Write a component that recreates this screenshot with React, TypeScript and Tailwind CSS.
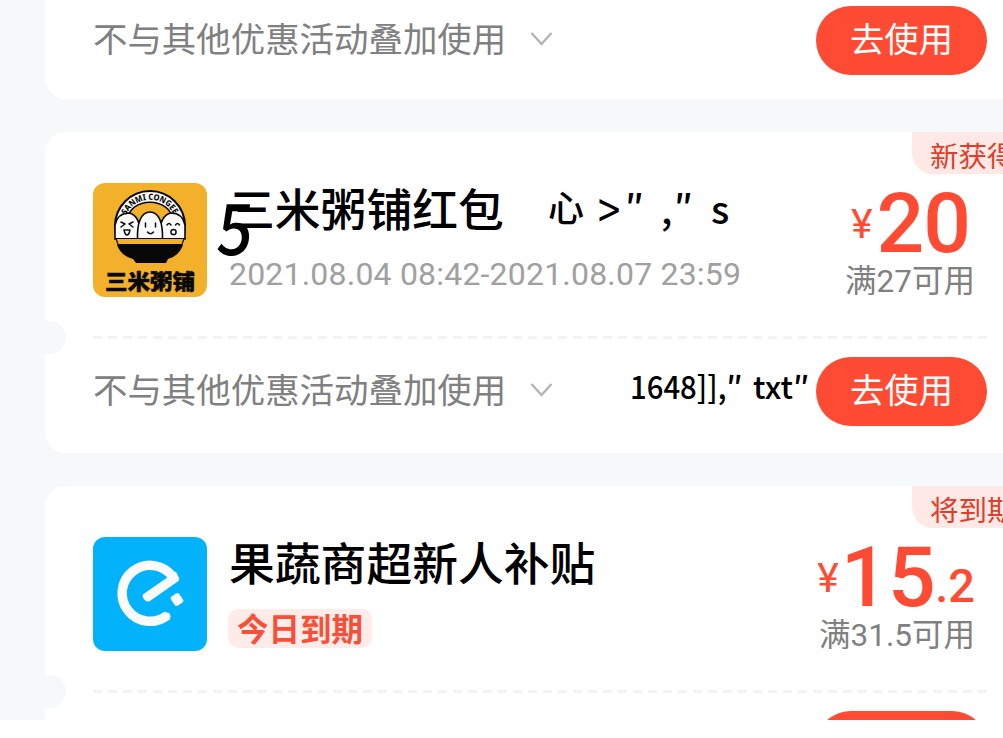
import type { ReactNode } from "react";

function CongeeLogo() {
  return (
    <svg viewBox="0 0 114 114" className="size-[114px] shrink-0 rounded-[12px]" aria-hidden="true">
      <rect width="114" height="114" fill="#f3b12b" />
      <circle cx="57" cy="43" r="35" fill="#f8f8f6" stroke="#080808" strokeWidth="2" />
      <path d="M34 38C36 13 78 13 80 38z" fill="#f3b12b" stroke="#080808" strokeWidth="1.500" />
      <path d="M22 56V42C24 33 29 30 36 30C43 31 47 38 49 56zM92 56V42C90 33 85 30 78 30C71 31 67 38 65 56z" fill="#fafafa" stroke="#080808" strokeWidth="1.600" />
      <path d="M44.500 56C44 40 48 29 57 29S70 40 69.500 56z" fill="#fafafa" stroke="#080808" strokeWidth="1.600" />
      <path d="M23 55.500h68l-2 6h-64z" fill="#f3b12b" stroke="#080808" strokeWidth="1.200" />
      <path d="M24 62h66q-4 11-15 14l-2 4H43l-3-4Q28 73 24 62z" fill="#080808" />
      <g fill="none" stroke="#111" strokeWidth="1.500" strokeLinecap="round" strokeLinejoin="round">
        <path d="M28 39l4 2-4 3M40 39l-4 2 4 3M31 47h6q-1 5-3 5t-3-5zM52.500 40v4M62.500 40v4M54.500 49q3 3.500 6 0M74 42q2-3 4 0M82.500 42q2-3 4 0" />
        <circle cx="80.500" cy="49" r="2.600" />
      </g>
      <path id="congee-arc" d="M33 32A26.500 26.500 0 0 1 81 32" fill="none" />
      <text className="font-['Noto_Sans'] text-[8.500px] font-extrabold" fill="#080808">
        <textPath href="#congee-arc" startOffset="0" textLength="59" lengthAdjust="spacingAndGlyphs">SANMI CONGEE</textPath>
      </text>
      <text x="12" y="105.500" textLength="90" lengthAdjust="spacingAndGlyphs" stroke="#080808" strokeWidth=".5" className="font-['Noto_Sans_CJK_SC',sans-serif] text-[21px] font-black" fill="#080808">三米粥铺</text>
    </svg>
  );
}

function ElemeLogo() {
  return (
    <svg viewBox="0 0 114 114" className="size-[114px] shrink-0 rounded-[12px]" aria-hidden="true">
      <rect width="114" height="114" fill="#02b3fc" />
      <path d="M74.500 78.300A28 28 0 1 1 79.500 39.500" fill="none" stroke="#fafafa" strokeWidth="9.500" />
      <path d="M51 57.500L74 41.500 82.500 35.500 85.500 41.500 85 43.500 56.500 63.500Q53.500 64.500 51.500 61.500T51 57.500z" fill="#fafafa" stroke="#fafafa" strokeWidth="1.500" strokeLinejoin="round" />
      <path d="M72 76l3.500 0.500 1.500 3-3 2.500" fill="#fafafa" stroke="#fafafa" strokeWidth="1.500" strokeLinejoin="round" />
      <rect x="79.500" y="57.500" width="9" height="10" rx="2" transform="rotate(-34 84 62.500)" fill="#fafafa" stroke="#fafafa" />
    </svg>
  );
}

function UseButton() {
  return (
    <button className="h-[69px] w-[171px] shrink-0 rounded-full bg-[#ff4b33] pb-[6px] text-[34.300px] leading-none font-normal text-white">
      去使用
    </button>
  );
}

function Terms({ note }: { note?: ReactNode }) {
  return (
    <div className="flex h-[69px] items-center pr-4 pl-12">
      <span className="pb-[6px] text-[34.450px] leading-none whitespace-nowrap text-[#808080]">不与其他优惠活动叠加使用</span>
      <svg viewBox="0 0 24 16" className="mb-1 ml-6 h-4 w-6 shrink-0" fill="none" stroke="#b3b3b3" strokeWidth="2.300">
        <path d="M1.500 2l10 11 10-11" />
      </svg>
      {note}
      <div className="ml-auto">
        <UseButton />
      </div>
    </div>
  );
}

function Divider() {
  return (
    <div className="flex h-[33px] items-center">
      <div className="h-[33px] w-[21px] rounded-r-[17px] bg-[#f7f8fa]" />
      <div className="mr-4 ml-[27px] h-[3px] flex-1 bg-[repeating-linear-gradient(90deg,#f3f3f3_0_9px,transparent_9px_15px)]" />
    </div>
  );
}

type CouponProps = {
  logo: ReactNode;
  title: string;
  detail: ReactNode;
  amount: ReactNode;
  limit: string;
  badge: string;
  note?: ReactNode;
};

function Coupon({ logo, title, detail, amount, limit, badge, note }: CouponProps) {
  return (
    <section className="relative h-[321px] shrink-0 overflow-hidden rounded-l-[21px] bg-white">
      <div className="flex h-[189px] pt-[51px] pr-[28px] pl-12">
        {logo}
        <div className="ml-[22px] flex flex-col items-start">
          <h2 className="h-[54px] text-[45.800px] leading-[49px] font-medium whitespace-nowrap text-black">{title}</h2>
          {detail}
        </div>
        <div className="ml-auto flex flex-col items-end pt-[2px]">
          <div className="flex h-[76px] items-baseline font-['Roboto','Noto_Sans_CJK_SC',sans-serif] text-[#ff4b33]">{amount}</div>
          <p className="h-10 font-['Roboto','Noto_Sans_CJK_SC',sans-serif] text-[31.500px] leading-[41px] whitespace-nowrap text-[#808080]">{limit}</p>
        </div>
      </div>
      <Divider />
      <div className="pt-[3px]">
        <Terms note={note} />
      </div>
      <span className="absolute top-0 left-[867px] h-[42px] w-[120px] rounded-bl-[21px] bg-[#ffe9e6] pl-[18px] text-[28.500px] leading-[45px] whitespace-nowrap text-[#e13d2b]">
        {badge}
      </span>
    </section>
  );
}

export default function App() {
  return (
    <main className="h-[738px] w-[1003px] overflow-hidden bg-white font-['Noto_Sans_CJK_SC',sans-serif]">
      <div className="relative flex h-[720px] flex-col gap-[33px] overflow-hidden bg-[#f7f8fa] pl-[45px]">
        <section className="h-[99px] shrink-0 rounded-bl-[21px] bg-white pt-[6px]">
          <Terms />
        </section>
        <Coupon
          logo={<CongeeLogo />}
          title="三米粥铺红包"
          detail={
            <p className="font-['Roboto',sans-serif] text-[32px] leading-[75px] tracking-[.2px] whitespace-nowrap text-[#a0a0a0]">
              2021.08.04 08:42-2021.08.07 23:59
            </p>
          }
          amount={
            <>
              <span className="mr-[4px] -translate-y-[14px] text-[41px] leading-none font-normal">¥</span>
              <span className="mr-[5px] text-[84px] leading-[78px] tracking-[-1px] font-medium">20</span>
            </>
          }
          limit="满27可用"
          badge="新获得"
          note={
            <div className="ml-[76px] flex w-[179px] pb-[11px] text-[31.500px] leading-none font-medium text-black">
              <span className="w-[98px] origin-left scale-x-[.93]">1648]],</span>
              <span className="w-[29px] -translate-x-[2px]">″</span>
              <span className="w-[40px]">txt</span>
              <span>″</span>
            </div>
          }
        />
        <Coupon
          logo={<ElemeLogo />}
          title="果蔬商超新人补贴"
          detail={
            <span className="mt-[18px] -ml-px h-[39px] w-[144px] rounded-[10px] bg-[#ffece9] text-center text-[31.500px] leading-[37px] font-bold text-[#f6503a]">
              今日到期
            </span>
          }
          amount={
            <>
              <span className="mr-[2px] -translate-y-[14px] text-[41px] leading-none font-normal">¥</span>
              <span className="text-[84px] leading-[78px] tracking-[-.5px] font-medium">15</span>
              <span className="-translate-y-[4px] text-[47px] leading-none font-medium">.2</span>
            </>
          }
          limit="满31.5可用"
          badge="将到期"
        />
        <span className="absolute top-[184px] left-[218px] origin-left scale-x-[.88] skew-x-[-6deg] text-[71px] leading-[80px] font-medium text-black">5</span>
        <span className="absolute top-[182px] left-[548px] text-[36px] leading-[48px] font-medium text-black">心</span>
        <span className="absolute top-[184px] left-[598px] scale-y-[1.250] text-[40px] leading-[48px] font-normal text-black">&gt;</span>
        <span className="absolute top-[181px] left-[625px] text-[36px] leading-[48px] font-medium text-black">″</span>
        <span className="absolute top-[184px] left-[661px] text-[38px] leading-[48px] font-medium text-black">,</span>
        <span className="absolute top-[181px] left-[674px] text-[36px] leading-[48px] font-medium text-black">″</span>
        <span className="absolute top-[184px] left-[711px] text-[38px] leading-[48px] font-medium text-black">s</span>
      </div>
    </main>
  );
}
